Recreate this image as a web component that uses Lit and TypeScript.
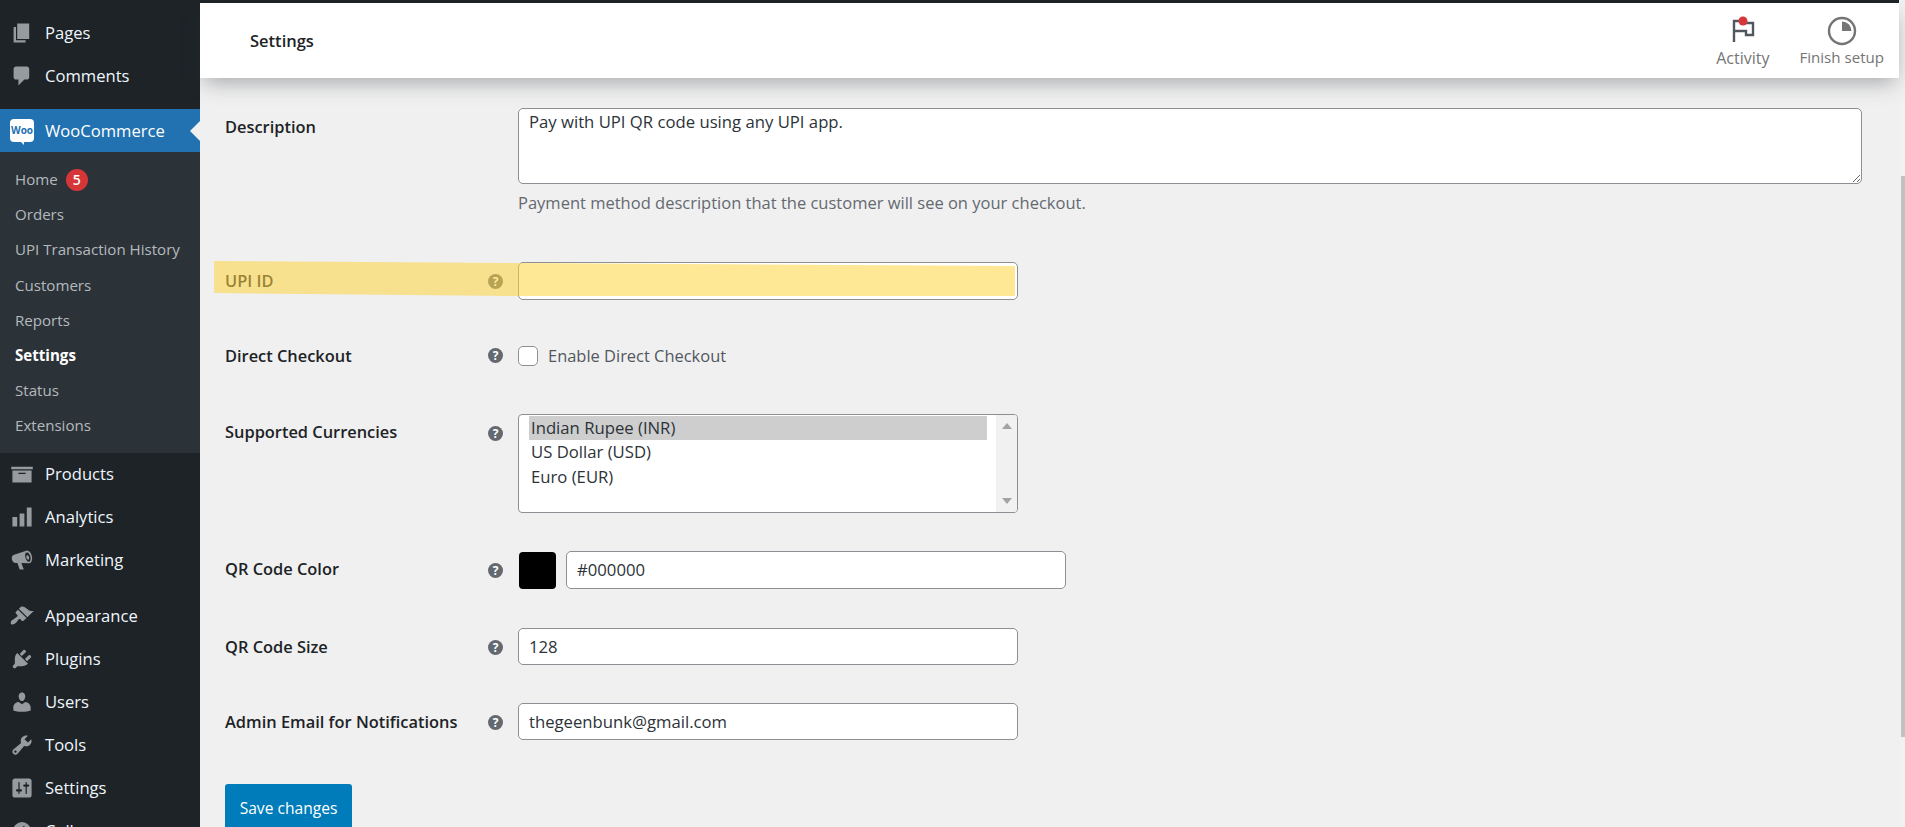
import { LitElement, css, html, svg } from 'lit';
import { customElement, state } from 'lit/decorators.js';

const ICONS: Record<string, unknown> = {
  pages: svg`<path d="M6 15V2h10v13H6zm-1 1h8v2H3V5h2v11z"/>`,
  comments: svg`<path d="M5 2h9c1.1 0 2 .9 2 2v7c0 1.1-.9 2-2 2h-2l-5 5v-5H5c-1.1 0-2-.9-2-2V4c0-1.1.9-2 2-2z"/>`,
  products: svg`<path d="M19 4v2H1V4h18zM2 7h16v10H2V7zm11 3V9H7v1h6z" fill-rule="evenodd"/>`,
  analytics: svg`<path d="M18 18V2h-4v16h4zm-6 0V7H8v11h4zm-6 0v-8H2v8h4z"/>`,
  marketing: svg`<path fill-rule="evenodd" d="M13.5 2.2c2-.6 4 1.6 4.7 4.4.7 2.9-.1 5.6-2.1 6.2l-6.6-.3 2 5.5H8l-1.8-5.4-1.7-.1c-1.3 0-2.4-1.100-2.900-2.900-.4-1.700.1-3.200 1.200-3.800zm.4 1.500c-1.200.3-1.600 2.300-1 4.400.5 2.100 1.800 3.600 3 3.300s1.600-2.300 1.100-4.400c-.6-2.100-1.900-3.600-3.100-3.300zm.4 2.300c.7-.2 1.300.500 1.600 1.500.3 1.100 0 2-.6 2.200-.7.200-1.300-.500-1.600-1.500-.3-1.100 0-2 .6-2.200z"/>`,
  appearance: svg`<path d="M14.48 11.06L7.41 3.99l1.5-1.5c.5-.56 2.3-.47 3.51.32 1.21.8 1.43 1.28 2.91 2.1 1.18.64 2.45 1.26 4.45.85zm-.71.71L6.7 4.7 4.93 6.47c-.39.39-.39 1.02 0 1.41l1.06 1.06c.39.39.39 1.03 0 1.42-.6.6-1.43 1.11-2.21 1.69-.35.26-.7.53-1.010.84C1.43 13.07.1 15.1.9 16.9c1.500.8 3.400-.500 4.700-1.900.59-.64 1.100-1.460 1.690-2.200.39-.39 1.030-.39 1.420 0l1.060 1.060c.39.39 1.020.39 1.410 0z"/>`,
  plugins: svg`<path d="M13.11 4.36L9.87 7.6 8 5.73l3.24-3.24c.35-.34 1.05-.2 1.56.32.52.51.66 1.21.31 1.55zm-8 1.77l.91-1.12 9.01 9.01-1.19.84c-.71.71-2.63 1.16-3.82 1.16H6.14L4.9 17.26c-.59.59-1.54.59-2.12 0-.59-.58-.59-1.53 0-2.12l1.24-1.24v-3.88c0-1.13.4-3.19 1.09-3.89zm7.26 3.97l3.24-3.24c.34-.35 1.04-.21 1.55.31.52.51.66 1.21.31 1.55l-3.24 3.25z"/>`,
  users: svg`<path d="M10 9.25c-2.27 0-2.73-3.44-2.73-3.44C7 4.02 7.82 2 9.97 2c2.16 0 2.98 2.02 2.71 3.81 0 0-.41 3.44-2.68 3.44zm0 2.57L12.72 10c2.39 0 4.52 2.33 4.52 4.53v2.49s-3.65 1.13-7.24 1.13c-3.65 0-7.24-1.13-7.24-1.13v-2.49c0-2.25 1.94-4.48 4.47-4.48z"/>`,
  tools: svg`<path d="M16.68 9.77c-1.34 1.34-3.3 1.67-4.95.99l-5.41 6.52c-.99.99-2.59.99-3.58 0s-.99-2.59 0-3.57l6.52-5.42c-.68-1.65-.35-3.61.99-4.95 1.28-1.28 3.12-1.62 4.72-1.06l-2.89 2.89 2.82 2.82 2.86-2.87c.53 1.58.18 3.39-1.08 4.65zM3.81 16.21c.4.39 1.04.39 1.43 0 .4-.4.4-1.04 0-1.43-.39-.4-1.03-.4-1.43 0-.39.39-.39 1.03 0 1.43z"/>`,
  settings: svg`<path d="M18 16V4c0-1.1-.9-2-2-2H4c-1.1 0-2 .9-2 2v12c0 1.1.9 2 2 2h12c1.1 0 2-.9 2-2zM8 11h1c.55 0 1 .45 1 1s-.45 1-1 1H8v1.5c0 .28-.22.5-.5.5s-.5-.22-.5-.5V13H6c-.55 0-1-.45-1-1s.45-1 1-1h1V5.5c0-.28.22-.5.5-.5s.5.22.5.5V11zm5-2h-1c-.55 0-1-.45-1-1s.45-1 1-1h1V5.5c0-.28.22-.5.5-.5s.5.22.5.5V7h1c.55 0 1 .45 1 1s-.45 1-1 1h-1v5.500c0 .28-.22.5-.5.5s-.5-.22-.5-.5V9z"/>`,
  collapse: svg`<path d="M10 2.500a7.500 7.500 0 1 0 0 15 7.500 7.500 0 0 0 0-15zm2 3v9l-6-4.500z"/>`,
};

const TOP_GROUPS: { label: string; icon: string }[][] = [
  [
    { label: 'Products', icon: 'products' },
    { label: 'Analytics', icon: 'analytics' },
    { label: 'Marketing', icon: 'marketing' },
  ],
  [
    { label: 'Appearance', icon: 'appearance' },
    { label: 'Plugins', icon: 'plugins' },
    { label: 'Users', icon: 'users' },
    { label: 'Tools', icon: 'tools' },
    { label: 'Settings', icon: 'settings' },
    { label: 'Collapse', icon: 'collapse' },
  ],
];

const SUB_ITEMS: string[] = [
  'Orders',
  'UPI Transaction History',
  'Customers',
  'Reports',
  'Settings',
  'Status',
  'Extensions',
];

@customElement('app-root')
export class AppRoot extends LitElement {
  @state()
  private upiId = '';

  static styles = css`
    :host {
      display: block;
      height: 827px;
      overflow: hidden;
      background: #f0f0f0;
      color: #1d2327;
      font-family: 'Open Sans', 'Noto Sans', sans-serif;
    }

    .page {
      display: flex;
      height: 827px;
    }

    /* sidebar */
    .sidebar {
      flex: 0 0 200px;
      background: #1d2327;
      padding-top: 11px;
      overflow: hidden;
    }

    .item {
      box-sizing: border-box;
      display: flex;
      align-items: center;
      height: 43px;
      padding: 0 0 1px 10px;
      color: #f0f6fc;
      font-size: 16.6px;
    }

    .item svg {
      flex: 0 0 24px;
      width: 24px;
      height: 24px;
      margin: 1px 11px 0 0;
      fill: #979a9e;
    }

    .gap-top {
      margin-top: 12px;
    }

    .gap-group {
      margin-top: 13px;
    }

    .active {
      position: relative;
      background: #2271b1;
      color: #fff;
    }

    .active::after {
      content: '';
      position: absolute;
      right: 0;
      top: 12px;
      border: 10px solid transparent;
      border-left-width: 0;
      border-right-color: #f0f0f0;
    }

    .woo {
      position: relative;
      flex: 0 0 24px;
      height: 23px;
      margin: 1px 11px 0 0;
      border-radius: 4px;
      background: #fff;
      color: #2271b1;
      font-size: 10px;
      font-weight: 700;
      line-height: 23px;
      text-align: center;
    }

    .woo::after {
      content: '';
      position: absolute;
      left: 11px;
      bottom: -3px;
      border-top: 3px solid #fff;
      border-left: 3px solid transparent;
    }

    .submenu {
      background: #2c3338;
      padding: 10px 0 9px;
    }

    .sub {
      box-sizing: border-box;
      display: flex;
      align-items: center;
      gap: 8px;
      height: 35.2px;
      padding: 0 0 1px 15px;
      color: #b4b9be;
      font-size: 15.1px;
    }

    .sub.current {
      color: #fff;
      font-weight: 700;
    }

    .count {
      width: 22px;
      height: 22px;
      margin-top: 1px;
      border-radius: 50%;
      background: #d63638;
      color: #fff;
      font-size: 14px;
      font-weight: 600;
      line-height: 22px;
      text-align: center;
    }

    /* main column */
    .main {
      flex: 1;
      min-width: 0;
      display: flex;
      flex-direction: column;
    }

    .black-bar {
      flex: 0 0 3px;
      background: #1d2327;
    }

    .header {
      flex: 0 0 75px;
      position: relative;
      z-index: 1;
      display: flex;
      align-items: center;
      justify-content: space-between;
      padding: 0 15px 0 50px;
      background: #fff;
      box-shadow: 0 8px 20px -4px rgba(50, 55, 60, 0.4);
    }

    .title {
      font-size: 16.5px;
      font-weight: 600;
    }

    .actions {
      display: flex;
      gap: 30px;
      padding-top: 4px;
    }

    .action {
      display: flex;
      flex-direction: column;
      align-items: center;
      gap: 1px;
      color: #757575;
      font-size: 15.1px;
    }

    .action.wide {
      font-size: 16px;
    }

    .action svg {
      width: 30px;
      height: 30px;
    }

    .form {
      flex: 0 0 auto;
      display: flex;
      flex-direction: column;
      padding: 30px 0 0 25px;
    }

    .row {
      position: relative;
      display: grid;
      grid-template-columns: 263px 30px 1fr;
    }

    .label {
      padding-top: 8px;
      font-size: 16.4px;
      font-weight: 600;
      line-height: 22px;
    }

    .help {
      width: 15px;
      height: 15px;
      margin-top: 12px;
      border-radius: 50%;
      background: #646970;
      color: #fff;
      font-size: 12px;
      font-weight: 700;
      line-height: 15px;
      text-align: center;
    }

    input,
    textarea {
      box-sizing: border-box;
      display: block;
      border: 1px solid #8c8f94;
      border-radius: 5px;
      background: #fff;
      color: #2c3338;
      font: 16.7px 'Open Sans', 'Noto Sans', sans-serif;
      padding: 0 10px;
      outline: none;
    }

    textarea {
      width: 1344px;
      height: 76px;
      padding: 1px 10px;
    }

    .text {
      width: 500px;
      height: 37px;
    }

    .hint {
      margin-top: 8px;
      color: #646970;
      font-size: 16.5px;
      line-height: 22px;
    }

    .upi {
      margin-top: 48px;
    }

    .upi .text {
      height: 38px;
    }

    .mark {
      position: absolute;
      left: -11px;
      top: -1px;
      width: 801px;
      height: 36px;
      background: rgba(253, 211, 62, 0.55);
      clip-path: polygon(0 0, 304px 2px, 801px 5px, 801px 35px, 304px 35px, 0 32px);
      pointer-events: none;
    }

    .direct {
      margin-top: 44px;
      align-items: center;
    }

    .direct .label {
      padding-top: 0;
    }

    .direct .help {
      margin-top: 0;
    }

    .check {
      display: flex;
      align-items: center;
      gap: 10px;
      color: #50575e;
      font-size: 16.45px;
    }

    .check input {
      appearance: none;
      width: 20px;
      height: 20px;
      margin: 0;
      padding: 0;
    }

    .currencies {
      margin-top: 46.5px;
    }

    .currencies .label,
    .colour .label {
      padding-top: 7px;
    }

    .listbox {
      box-sizing: border-box;
      display: flex;
      width: 500px;
      height: 99px;
      border: 1px solid #8c8f94;
      border-radius: 4px;
      background: #fff;
      overflow: hidden;
      color: #2c3338;
      font-size: 16.7px;
    }

    .options {
      flex: 1;
      padding: 1px 9px 0 10px;
    }

    .option {
      height: 24.700px;
      line-height: 24.700px;
      padding-left: 2px;
    }

    .option.selected {
      background: #cecece;
    }

    .list-scroll {
      flex: 0 0 21px;
      display: flex;
      flex-direction: column;
      justify-content: space-between;
      align-items: center;
      padding: 8px 0;
      background: #f1f1f1;
    }

    .arrow-up,
    .arrow-down {
      border: 5px solid transparent;
      border-top-width: 0;
      border-bottom: 6px solid #a3a3a3;
    }

    .arrow-down {
      transform: rotate(180deg);
    }

    .colour {
      margin-top: 38px;
    }

    .colour-field {
      display: flex;
      gap: 10px;
      padding-left: 1px;
    }

    .swatch {
      width: 37px;
      height: 37px;
      margin-top: 1px;
      border-radius: 4px;
      background: #000;
    }

    .colour-field input {
      width: 500px;
    }

    .size {
      margin-top: 39px;
    }

    .email {
      margin-top: 38px;
    }

    button {
      align-self: flex-start;
      width: 127px;
      height: 48px;
      margin-top: 44px;
      border: none;
      border-radius: 3px;
      background: #007cba;
      color: #fff;
      font: 15.6px 'Open Sans', 'Noto Sans', sans-serif;
    }

    /* page scrollbar */
    .scrollbar {
      flex: 0 0 6px;
      box-sizing: border-box;
      padding: 176px 0 0 2px;
      background: #f1f1f1;
    }

    .thumb {
      height: 561px;
      background: #c1c1c1;
    }
  `;

  private icon(name: string) {
    return html`<svg viewBox="0 0 20 20" aria-hidden="true">${ICONS[name]}</svg>`;
  }

  private renderField(label: string, cls: string, value: string) {
    return html`
      <div class="row ${cls}">
        <div class="label">${label}</div>
        <div class="help">?</div>
        <input class="text" type="text" .value=${value} />
      </div>
    `;
  }

  private renderSidebar() {
    return html`
      <nav class="sidebar">
        <div class="item">${this.icon('pages')}Pages</div>
        <div class="item">${this.icon('comments')}Comments</div>
        <div class="item active gap-top">
          <div class="woo">Woo</div>
          WooCommerce
        </div>
        <div class="submenu">
          <div class="sub">Home <span class="count">5</span></div>
          ${SUB_ITEMS.map(
            (name) => html`<div class="sub ${name === 'Settings' ? 'current' : ''}">${name}</div>`,
          )}
        </div>
        ${TOP_GROUPS.map(
          (group, index) => html`
            <div class=${index ? 'gap-group' : ''}>
              ${group.map((entry) => html`<div class="item">${this.icon(entry.icon)}${entry.label}</div>`)}
            </div>
          `,
        )}
      </nav>
    `;
  }

  private renderHeader() {
    return html`
      <header class="header">
        <div class="title">Settings</div>
        <div class="actions">
          <div class="action wide">
            <svg viewBox="0 0 30 30" aria-hidden="true">
              <path d="M6 26V5h8M14 7h11v12h-7v-4H6" fill="none" stroke="#50575e" stroke-width="2.400" />
              <circle cx="15" cy="5" r="4.500" fill="#d63638" />
            </svg>
            Activity
          </div>
          <div class="action">
            <svg viewBox="0 0 30 30" aria-hidden="true">
              <circle cx="15" cy="15" r="13" fill="#fff" stroke="#757575" stroke-width="2.400" />
              <path d="M15 15V5.500a9.500 9.500 0 0 1 9.500 9.500z" fill="#757575" />
            </svg>
            Finish setup
          </div>
        </div>
      </header>
    `;
  }

  private renderForm() {
    return html`
      <form class="form">
        <div class="row">
          <div class="label">Description</div>
          <div></div>
          <div>
            <textarea .value=${'Pay with UPI QR code using any UPI app.'}></textarea>
            <div class="hint">Payment method description that the customer will see on your checkout.</div>
          </div>
        </div>

        <div class="row upi">
          <div class="label">UPI ID</div>
          <div class="help">?</div>
          <input class="text" type="text" .value=${this.upiId} />
          <div class="mark"></div>
        </div>

        <div class="row direct">
          <div class="label">Direct Checkout</div>
          <div class="help">?</div>
          <label class="check"><input type="checkbox" />Enable Direct Checkout</label>
        </div>

        <div class="row currencies">
          <div class="label">Supported Currencies</div>
          <div class="help">?</div>
          <div class="listbox">
            <div class="options">
              <div class="option selected">Indian Rupee (INR)</div>
              <div class="option">US Dollar (USD)</div>
              <div class="option">Euro (EUR)</div>
            </div>
            <div class="list-scroll">
              <div class="arrow-up"></div>
              <div class="arrow-down"></div>
            </div>
          </div>
        </div>

        <div class="row colour">
          <div class="label">QR Code Color</div>
          <div class="help">?</div>
          <div class="colour-field">
            <div class="swatch"></div>
            <input type="text" .value=${'#000000'} />
          </div>
        </div>

        ${this.renderField('QR Code Size', 'size', '128')}
        ${this.renderField('Admin Email for Notifications', 'email', 'thegeenbunk@gmail.com')}

        <button type="button">Save changes</button>
      </form>
    `;
  }

  render() {
    return html`
      <div class="page">
        ${this.renderSidebar()}
        <div class="main">
          <div class="black-bar"></div>
          ${this.renderHeader()} ${this.renderForm()}
        </div>
        <div class="scrollbar"><div class="thumb"></div></div>
      </div>
    `;
  }
}

declare global {
  interface HTMLElementTagNameMap {
    'app-root': AppRoot;
  }
}
